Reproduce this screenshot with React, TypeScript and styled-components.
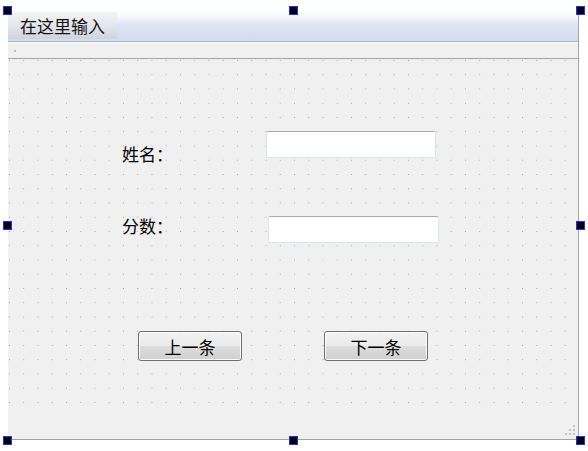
import React from 'react';
import styled, { createGlobalStyle } from 'styled-components';

const GlobalStyle = createGlobalStyle`
html, body {
    margin: 0;
    padding: 0;
    background: #ffffff;
}
body {
    font-family: "Noto Sans CJK SC", "Noto Sans", sans-serif;
}
`;

const Stage = styled.div`
position: relative;
width: 588px;
height: 451px;
box-sizing: border-box;
padding: 10px 9px 11px 8px;
`;

const Form = styled.div`
display: flex;
flex-direction: column;
height: 100%;
box-sizing: border-box;
border-right: 1px solid #a3a3a3;
border-bottom: 1px solid #a3a3a3;
`;

const MenuBar = styled.div`
display: flex;
align-items: flex-end;
height: 32px;
padding-bottom: 2px;
box-sizing: border-box;
background: linear-gradient(to bottom, #ffffff 0%, #f6f8fc 22%, #dde4f3 48%, #d3dcef 100%);
border-bottom: 1px solid #aab5cc;
`;

const MenuItem = styled.div`
display: flex;
align-items: center;
height: 27px;
padding: 0 12px;
font-size: 17px;
color: #141414;
background: linear-gradient(to bottom, #f3f4f7 0%, #e1e4ea 55%, #cfd3dd 100%);
`;

const ToolStrip = styled.div`
position: relative;
height: 17px;
background: #f0f0f0;
border-top: 1px solid #fafafa;
border-bottom: 1px solid #a6a6a6;
box-sizing: border-box;
`;

const ToolGrip = styled.span`
position: absolute;
left: 6px;
top: 7px;
width: 2px;
height: 2px;
background: #bdbdbd;
`;

// the designer canvas: widgets sit where the form author dropped them
const Canvas = styled.div`
position: relative;
flex: 1;
box-sizing: border-box;
padding-bottom: 33px;
background:
    conic-gradient(at 1px 1px, transparent 75%, #a2a2a2 0) 1px 1px / 14.25px 14.25px content-box,
    linear-gradient(#f0f0f0, #f0f0f0) border-box;
`;

const Label = styled.div<{ $x: number; $y: number }>`
position: absolute;
left: ${p => p.$x}px;
top: ${p => p.$y}px;
font-size: 17px;
line-height: 17px;
color: #000000;
white-space: nowrap;
`;

const LineEdit = styled.div<{ $x: number; $y: number; $w: number }>`
position: absolute;
left: ${p => p.$x}px;
top: ${p => p.$y}px;
width: ${p => p.$w}px;
height: 27px;
box-sizing: border-box;
background: #ffffff;
border: 1px solid #dde3ea;
border-top-color: #a9abb2;
border-radius: 2px;
`;

const Button = styled.div<{ $x: number; $y: number }>`
position: absolute;
left: ${p => p.$x}px;
top: ${p => p.$y}px;
width: 104px;
height: 30px;
box-sizing: border-box;
display: flex;
align-items: center;
justify-content: center;
font-size: 17px;
color: #000000;
border: 1px solid #707070;
border-radius: 3px;
box-shadow: inset 0 0 0 1px #fbfbfb;
background: linear-gradient(to bottom, #f2f2f2 0%, #ebebeb 50%, #dddddd 51%, #cfcfcf 100%);
`;

const SizeGrip = styled.svg`
position: absolute;
right: 2px;
bottom: 3px;
`;

const Handle = styled.span<{ $x: number; $y: number }>`
position: absolute;
left: ${p => p.$x - 4}px;
top: ${p => p.$y - 4}px;
width: 9px;
height: 9px;
box-sizing: border-box;
background: #000000;
border: 1px solid #2a2aff;
`;

const handles: [number, number][] = [
    [7, 10], [293, 10], [580, 10],
    [7, 225], [580, 225],
    [7, 440], [293, 440], [580, 440],
];

export default function App() {
    return (
        <>
            <GlobalStyle />
            <Stage>
                <Form>
                    <MenuBar>
                        <MenuItem>在这里输入</MenuItem>
                    </MenuBar>
                    <ToolStrip>
                        <ToolGrip />
                    </ToolStrip>
                    <Canvas>
                        <Label $x={114} $y={86}>姓名：</Label>
                        <LineEdit $x={258} $y={72} $w={170} />
                        <Label $x={114} $y={158}>分数：</Label>
                        <LineEdit $x={260} $y={157} $w={171} />
                        <Button $x={130} $y={272}>上一条</Button>
                        <Button $x={316} $y={272}>下一条</Button>
                        <SizeGrip width="12" height="12" viewBox="0 0 12 12">
                            <rect x="9" y="1" width="2" height="2" fill="#c2c2c2" />
                            <rect x="5" y="5" width="2" height="2" fill="#c2c2c2" />
                            <rect x="9" y="5" width="2" height="2" fill="#c2c2c2" />
                            <rect x="1" y="9" width="2" height="2" fill="#c2c2c2" />
                            <rect x="5" y="9" width="2" height="2" fill="#c2c2c2" />
                            <rect x="9" y="9" width="2" height="2" fill="#c2c2c2" />
                        </SizeGrip>
                    </Canvas>
                </Form>
                {handles.map(([x, y], i) => (
                    <Handle key={i} $x={x} $y={y} />
                ))}
            </Stage>
        </>
    );
}
